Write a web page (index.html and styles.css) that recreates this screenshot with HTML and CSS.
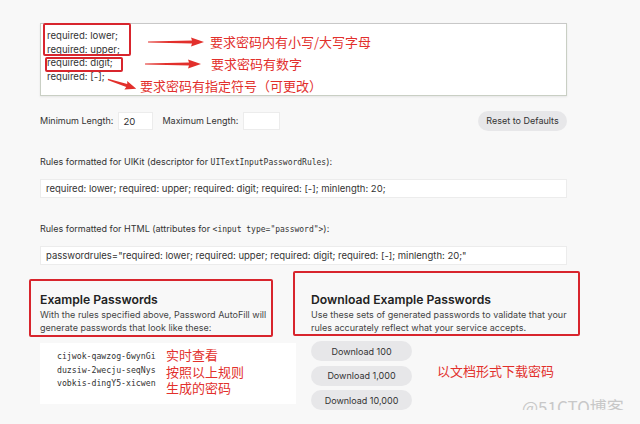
FILE: index.html
```html
<!DOCTYPE html>
<html lang="en">
<head>
    <meta charset="UTF-8">
    <title>Password Rules Validation Tool</title>
    <link rel="stylesheet" href="styles.css">
</head>
<body>
    <div class="page">
        <!-- rule editor -->
        <div class="rules-box">
            <div>required: lower;</div>
            <div>required: upper;</div>
            <div>required: digit;</div>
            <div>required: [-];</div>
        </div>

        <div class="length-row">
            <label>Minimum Length:</label>
            <span class="num-input">20</span>
            <label class="max-label">Maximum Length:</label>
            <span class="num-input num-wide"></span>
            <button class="pill reset">Reset to Defaults</button>
        </div>

        <div class="field-label">Rules formatted for UIKit (descriptor for <code>UITextInputPasswordRules</code>):</div>
        <div class="output-field">required: lower; required: upper; required: digit; required: [-]; minlength: 20;</div>

        <div class="field-label">Rules formatted for HTML (attributes for <code>&lt;input type="password"&gt;</code>):</div>
        <div class="output-field">passwordrules="required: lower; required: upper; required: digit; required: [-]; minlength: 20;"</div>

        <div class="examples">
            <section>
                <h2>Example Passwords</h2>
                <p>With the rules specified above, Password AutoFill will generate passwords that look like these:</p>
                <div class="passwords">
                    <div>cijwok-qawzog-6wynGi</div>
                    <div>duzsiw-2wecju-seqNys</div>
                    <div>vobkis-dingY5-xicwen</div>
                </div>
            </section>
            <section>
                <h2>Download Example Passwords</h2>
                <p>Use these sets of generated passwords to validate that your rules accurately reflect what your service accepts.</p>
                <div class="downloads">
                    <button class="pill">Download 100</button>
                    <button class="pill">Download 1,000</button>
                    <button class="pill">Download 10,000</button>
                </div>
            </section>
        </div>
    </div>

    <!-- red markup drawn over the screenshot -->
    <div class="mark box-a"></div>
    <div class="mark box-b"></div>
    <div class="mark box-c"></div>
    <div class="mark box-d"></div>

    <svg class="arrow arrow-a" width="56" height="10" viewBox="0 0 56 10"><polygon points="0,4.4 44,3.4 43,0.5 56,5 43,9.5 44,6.6 0,5.6" fill="#e2302c"/></svg>
    <svg class="arrow arrow-b" width="56" height="10" viewBox="0 0 56 10"><polygon points="0,4.4 44,3.4 43,0.5 56,5 43,9.5 44,6.6 0,5.6" fill="#e2302c"/></svg>
    <svg class="arrow arrow-c" width="30" height="10" viewBox="0 0 30 10"><polygon points="0,4.4 20,3.4 19,0.5 30,5 19,9.5 20,6.6 0,5.6" fill="#e2302c"/></svg>

    <div class="note note-a">要求密码内有小写/大写字母</div>
    <div class="note note-b">要求密码有数字</div>
    <div class="note note-c">要求密码有指定符号（可更改）</div>
    <div class="note note-d">实时查看<br>按照以上规则<br>生成的密码</div>
    <div class="note note-e">以文档形式下载密码</div>
    <div class="watermark">@51CTO博客</div>
</body>
</html>
```

FILE: styles.css
```css
body {
    margin: 0;
    background: #f8f8f8;
    color: #333;
    font-family: 'Inter', 'Noto Sans', sans-serif;
    font-size: 9px;
    position: relative;
}
.page {
    width: 527px;
    padding: 23px 0 0 40px;
}
code {
    font-family: 'DejaVu Sans Mono', monospace;
    font-size: 8px;
}
.rules-box {
    height: 73px;
    box-sizing: border-box;
    padding: 5px 6px;
    background: #fff;
    border: 1px solid #c9cfc4;
    border-top-color: #c8c8c8;
    box-shadow: 0 1px 2px rgba(0, 0, 0, 0.08);
    font-size: 9.6px;
    line-height: 13.6px;
}
.length-row {
    display: flex;
    align-items: center;
    margin-top: 15px;
    height: 19px;
}
.num-input {
    width: 35px;
    height: 18px;
    box-sizing: border-box;
    margin-left: 5px;
    padding: 3px 4px;
    background: #fff;
    border: 1px solid #ececec;
    font-size: 9.6px;
}
.num-wide {
    width: 37px;
}
.max-label {
    margin-left: 9px;
}
.pill {
    font-family: inherit;
    font-size: 9px;
    color: #333;
    background: #e7e7e9;
    border: none;
    border-radius: 10px;
    height: 20px;
    padding: 0;
}
.reset {
    margin-left: auto;
    width: 89px;
}
.field-label {
    margin-top: 25px;
    line-height: 13px;
}
.output-field {
    margin-top: 10px;
    height: 19px;
    box-sizing: border-box;
    padding: 3px 5px;
    background: #fff;
    border: 1px solid #ececec;
    font-size: 9.5px;
    white-space: nowrap;
}
.field-label + .output-field + .field-label {
    margin-top: 24px;
}
.examples {
    display: grid;
    grid-template-columns: 256px 256px;
    column-gap: 15px;
    margin-top: 27px;
}
.examples h2 {
    margin: 0;
    font-size: 12.2px;
    font-weight: 600;
    color: #222;
    line-height: 16px;
}
.examples p {
    margin: 0;
    line-height: 13px;
    color: #444;
}
.passwords {
    margin-top: 9px;
    height: 61px;
    box-sizing: border-box;
    padding: 7px 17px;
    background: #fff;
    font-family: 'DejaVu Sans Mono', monospace;
    font-size: 8.2px;
    line-height: 13.5px;
}
.passwords div {
    width: fit-content;
}
.downloads {
    margin-top: 7px;
    display: flex;
    flex-direction: column;
    gap: 4.5px;
}
.downloads .pill {
    width: 101px;
}

/* annotation layer */
.mark {
    position: absolute;
    border: 2px solid #d8252d;
    border-radius: 2px;
    box-sizing: border-box;
}
.box-a { left: 43px; top: 23px; width: 88px; height: 33px; }
.box-b { left: 45px; top: 57px; width: 78px; height: 15px; }
.box-c { left: 29px; top: 279px; width: 244px; height: 58px; }
.box-d { left: 293px; top: 271px; width: 287px; height: 65px; }
.arrow {
    position: absolute;
}
.arrow-a { left: 148px; top: 37px; }
.arrow-b { left: 145px; top: 59px; }
.arrow-c { left: 107px; top: 79px; transform: rotate(18deg); }
.note {
    position: absolute;
    color: #e2302c;
    font-family: 'Noto Sans CJK SC', sans-serif;
    font-size: 13px;
    line-height: 16.5px;
    white-space: nowrap;
}
.note-a { left: 210px; top: 34px; }
.note-b { left: 211px; top: 56px; }
.note-c { left: 140px; top: 78px; }
.note-d { left: 166px; top: 347px; }
.note-e { left: 437px; top: 363px; }
.watermark {
    position: absolute;
    left: 522px;
    top: 394px;
    color: #c8c8c8;
    font-family: 'Noto Sans CJK SC', sans-serif;
    font-size: 17px;
}
```
